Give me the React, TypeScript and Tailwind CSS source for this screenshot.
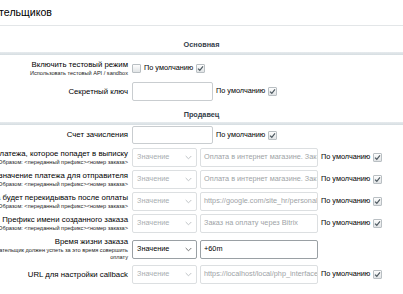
import React from 'react';

const font = { fontFamily: '"Liberation Sans", Arial, sans-serif' };

function Box({ checked }: { checked?: boolean }) {
  return (
    <span className="inline-flex h-[9px] w-[9px] shrink-0 items-center justify-center rounded-[1px] border border-[#b9bfc3] bg-gradient-to-b from-[#fdfdfd] to-[#e1e4e6]">
      {checked && (
        <svg width="7" height="7" viewBox="0 0 7 7">
          <path d="M1 3.6 L2.8 5.3 L6 1.3" fill="none" stroke="#4f5b62" strokeWidth="1.2" />
        </svg>
      )}
    </span>
  );
}

function Def() {
  return (
    <span className="flex items-center gap-[3px] whitespace-nowrap text-[7.3px] text-black">
      По умолчанию <Box checked />
    </span>
  );
}

function Label({ main, sub }: { main: string; sub?: string[] }) {
  return (
    <div className="mr-[4px] flex w-[128px] shrink-0 flex-col items-end justify-center whitespace-nowrap text-right">
      <div className="text-[7.8px] leading-[10px] text-black">{main}</div>
      {sub?.map((s) => (
        <div key={s} className="text-[5.6px] leading-[7px] text-[#222]">
          {s}
        </div>
      ))}
    </div>
  );
}

function Sel({ on }: { on?: boolean }) {
  return (
    <div
      className={`flex h-[19px] w-[65px] shrink-0 items-center justify-between rounded-[2px] border bg-white pl-[4px] pr-[4px] text-[7.3px] ${
        on ? 'border-[#9aa0a4] text-black' : 'border-[#dcdfe1] text-[#a8adb0]'
      }`}
    >
      Значение
      <svg width="7" height="5" viewBox="0 0 7 5">
        <path d="M0.7 1 L3.5 3.8 L6.3 1" fill="none" stroke={on ? '#666' : '#b8bcbf'} strokeWidth="0.9" />
      </svg>
    </div>
  );
}

function Field({ text, on }: { text: string; on?: boolean }) {
  return (
    <div
      className={`flex h-[19px] w-[118px] shrink-0 items-center overflow-hidden whitespace-nowrap rounded-[2px] border pl-[3px] text-[7.3px] ${
        on ? 'border-[#9aa0a4] text-black' : 'border-[#dcdfe1] text-[#9ea3a6]'
      }`}
    >
      {text}
    </div>
  );
}

function Heading({ title }: { title: string }) {
  return (
    <div className="flex flex-col items-center">
      <div className="flex h-[14px] items-center text-[7.3px] font-bold text-[#34404a]">{title}</div>
      <div className="h-[3px] w-full bg-gradient-to-b from-[#e6ebee] to-[#d6dde1]" />
    </div>
  );
}

const sub1 = ['Образом: <переданный префикс><номер заказа>'];

function Row({ main, sub, children, h = 'h-[19px]' }: { main: string; sub?: string[]; children: React.ReactNode; h?: string }) {
  return (
    <div className={`flex items-center ${h}`}>
      <Label main={main} sub={sub} />
      <div className="flex items-center gap-[3px]">{children}</div>
    </div>
  );
}

export default function App() {
  return (
    <div className="h-[294px] w-[403px] overflow-hidden bg-white" style={font}>
      <div className="flex h-[25px] w-[52px] items-center justify-end whitespace-nowrap text-[10.6px] text-black">
        Типы плательщиков
      </div>
      <div className="h-px w-full bg-[#e3e6e8]" />

      <div className="mt-[12px]">
        <Heading title="Основная" />
      </div>

      <div className="mt-[2px]">
        <Row main="Включить тестовый режим" sub={['Использовать тестовый API / sandbox']} h="h-[22px]">
          <Box />
          <Def />
        </Row>
      </div>

      <div className="mt-[3px]">
        <Row main="Секретный ключ">
          <div className="h-[19px] w-[81px] rounded-[2px] border border-[#c9cdd0]" />
          <Def />
        </Row>
      </div>

      <div className="mt-[7px]">
        <Heading title="Продавец" />
      </div>

      <div className="mt-[1px]">
        <Row main="Счет зачисления" h="h-[18px]">
          <div className="h-[18px] w-[81px] rounded-[2px] border border-[#c9cdd0]" />
          <Def />
        </Row>
      </div>

      <div className="mt-[4px] flex flex-col gap-[3px]">
        <Row main="Назначение платежа, которое попадет в выписку" sub={sub1}>
          <Sel />
          <Field text="Оплата в интернет магазине. Заказ №" />
          <Def />
        </Row>
        <Row main="Назначение платежа для отправителя" sub={sub1}>
          <Sel />
          <Field text="Оплата в интернет магазине. Заказ №" />
          <Def />
        </Row>
        <Row main="Страница, на которую клиента будет перекидывать после оплаты" sub={sub1}>
          <Sel />
          <Field text="https://google.com/site_hr/personal/" />
          <Def />
        </Row>
        <Row main="Префикс имени созданного заказа" sub={sub1}>
          <Sel />
          <Field text="Заказ на оплату через Bitrix" />
          <Def />
        </Row>
        <Row
          main="Время жизни заказа"
          sub={['Время, в течение которого плательщик должен успеть за это время совершить', 'оплату']}
          h="h-[26px]"
        >
          <Sel on />
          <Field text="+60m" on />
        </Row>
        <Row main="URL для настройки callback">
          <Sel />
          <Field text="https://localhost/local/php_interface/" />
          <Def />
        </Row>
      </div>
    </div>
  );
}
